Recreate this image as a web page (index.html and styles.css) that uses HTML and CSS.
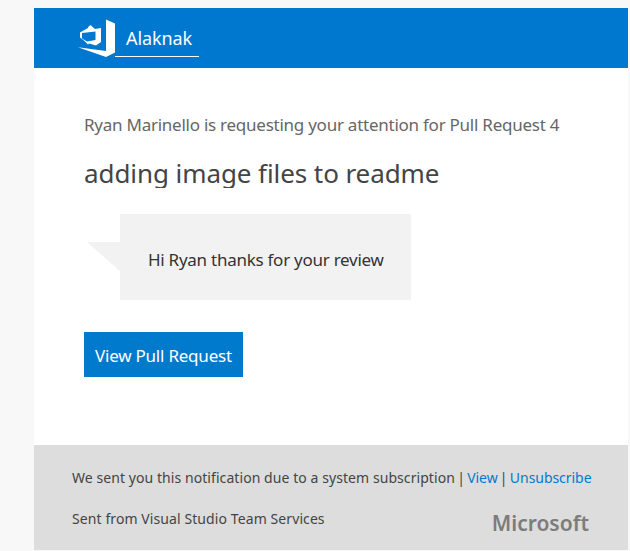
FILE: index.html
```html
<!DOCTYPE html>
<html lang="en">
<head>
<meta charset="utf-8">
<title>Pull Request 4</title>
<link rel="stylesheet" href="styles.css">
</head>
<body>
<main class="card">
  <header class="header">
    <svg class="logo" width="37" height="38" viewBox="78 18.5 37 38" aria-hidden="true">
      <path fill="#fff" d="M106 19l9 4v29l-9 4.500-28-9.800L106 50.500z"/>
      <path fill="#fff" fill-rule="evenodd" d="M80 32l8-4.500.5-1.500 2-1.500 4.500 4 6-1v14l-5 3.500-7-2-1 1-4-4-4-3zM82 32.500v5.500l5 3 8.500-1.500v-8.500z"/>
    </svg>
    <a class="account"><span>Alaknak</span></a>
  </header>
  <section class="content">
    <p class="intro">Ryan Marinello is requesting your attention for Pull Request 4</p>
    <h1 class="title">adding image files to readme</h1>
    <div class="comment">
      <svg class="tail" width="33" height="29" viewBox="0 0 33 29" aria-hidden="true"><path fill="#f2f2f2" d="M0 0h33v29z"/></svg>
      <p class="bubble">Hi Ryan thanks for your review</p>
    </div>
    <a class="button">View Pull Request</a>
  </section>
  <footer class="footer">
    <p class="notice">We sent you this notification due to a system subscription <span class="divider">|</span> <a class="link">View</a> <span class="divider">|</span> <a class="link">Unsubscribe</a></p>
    <div class="signoff">
      <p class="sender">Sent from Visual Studio Team Services</p>
      <span class="brand">Microsoft</span>
    </div>
  </footer>
</main>
</body>
</html>
```
FILE: styles.css
```css
* { box-sizing: border-box; }
body {
  margin: 0;
  padding: 8px 2px 1px 34px;
  height: 551px;
  overflow: hidden;
  background: #f8f8f8;
  font-family: "Noto Sans", "Open Sans", sans-serif;
  color: #444;
}
p, h1 { margin: 0; font-weight: 400; white-space: nowrap; }
.card { display: flex; flex-direction: column; height: 542px; background: #fff; }
.header { display: flex; height: 60px; padding: 10.5px 0 0 44px; background: #0078d0; }
.logo { flex: none; }
.account {
  display: block;
  width: 84px;
  height: 38px;
  padding-left: 11px;
  border-bottom: 1px solid #fff;
  color: #fff;
  font-size: 18px;
  letter-spacing: -.1px;
  line-height: 38px;
}
.content { flex: 1; padding: 44px 0 0 50px; }
.intro { height: 26px; line-height: 26px; font-size: 17px; letter-spacing: -.25px; color: #666; }
.title { height: 50px; overflow: hidden; line-height: 70px; font-size: 26px; letter-spacing: -.08px; }
.comment { display: flex; margin-top: 26px; padding-left: 3px; }
.tail { flex: none; margin-top: 28px; }
.bubble { width: 291px; height: 86px; padding-left: 28px; background: #f2f2f2; color: #333; font-size: 17px; letter-spacing: -.26px; line-height: 91px; }
.button { display: block; width: 159px; height: 45px; margin-top: 32px; padding-left: 11px; background: #007acc; color: #fff; font-size: 17px; letter-spacing: -.22px; line-height: 47px; }
.footer { height: 105px; padding: 20px 39px 0 38px; background: #ddd; }
.notice { font-size: 14px; letter-spacing: .07px; line-height: 26px; }
.divider { margin: 0 -1.5px; }
.link { color: #007acc; letter-spacing: -.05px; }
.signoff { display: flex; justify-content: space-between; margin-top: 15px; }
.sender { font-size: 14px; letter-spacing: .09px; line-height: 26px; }
.brand { height: 26px; color: #7c7c7c; font-size: 21px; font-weight: 600; line-height: 34px; }
```
